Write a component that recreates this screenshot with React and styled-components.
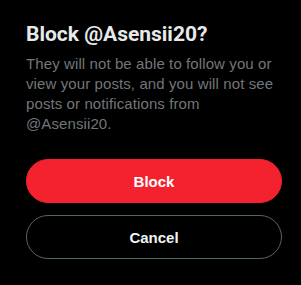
import React from 'react'
import styled, { createGlobalStyle } from 'styled-components'

const GlobalStyle = createGlobalStyle`
  html, body {
    margin: 0;
    padding: 0;
    background: #000;
  }
`;

const Dialog = styled.div`
  width: 301px;
  height: 285px;
  box-sizing: border-box;
  background: #000;
  padding: 22px 19px 0 26px;
  font-family: "Liberation Sans", Arial, sans-serif;
  display: flex;
  flex-direction: column;
`;

const Title = styled.h1`
  margin: 0;
  font-family: Roboto, "Liberation Sans", sans-serif;
  font-size: 21px;
  line-height: 24px;
  font-weight: 700;
  color: #e7e9ea;
`;

const Text = styled.p`
  margin: 8px 0 0;
  font-size: 15px;
  line-height: 20px;
  letter-spacing: 0.1px;
  color: #71767b;
`;

const Actions = styled.div`
  display: flex;
  flex-direction: column;
  gap: 12px;
  margin-top: 25px;
`;

const Button = styled.button`
  height: 44px;
  border-radius: 22px;
  box-sizing: border-box;
  font-family: inherit;
  font-size: 15px;
  font-weight: 700;
  cursor: pointer;
  border: 1px solid ${p => (p.$danger ? '#f4212e' : '#536471')};
  background: ${p => (p.$danger ? '#f4212e' : 'transparent')};
  color: ${p => (p.$danger ? '#fff' : '#eff3f4')};
`;

function App() {
  return (
    <>
      <GlobalStyle />
      <Dialog>
        <Title>Block @Asensii20?</Title>
        <Text>
          They will not be able to follow you or view your posts, and you will not see posts or
          notifications from @Asensii20.
        </Text>
        <Actions>
          <Button $danger>Block</Button>
          <Button>Cancel</Button>
        </Actions>
      </Dialog>
    </>
  )
}

export default App
